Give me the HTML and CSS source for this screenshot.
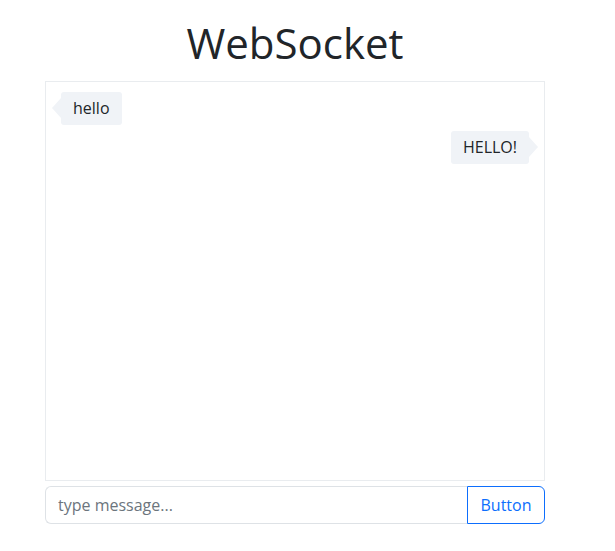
FILE: index.html
```html
<!DOCTYPE html>
<html lang="en">
<head>
<meta charset="utf-8">
<title>WebSocket</title>
<link rel="stylesheet" href="styles.css">
</head>
<body>
<div class="app">
  <h1 class="title">WebSocket</h1>
  <div class="chat">
    <div class="row left"><div class="bubble">hello</div></div>
    <div class="row right"><div class="bubble">HELLO!</div></div>
  </div>
  <div class="composer">
    <input class="field" type="text" placeholder="type message...">
    <button class="send" type="button">Button</button>
  </div>
</div>
</body>
</html>
```
FILE: styles.css
```css
html, body {
  margin: 0;
  padding: 0;
  background: #fff;
}
body {
  font-family: "Open Sans", "Noto Sans", sans-serif;
  color: #212529;
  font-size: 16px;
}
.app {
  width: 500px;
  margin-left: 45px;
  display: flex;
  flex-direction: column;
}
.title {
  margin: 14px 0 9px;
  font-weight: 400;
  font-size: 42px;
  line-height: 58px;
  text-align: center;
  letter-spacing: 0;
}
.chat {
  box-sizing: border-box;
  height: 400px;
  border: 1px solid #e9ecef;
  padding: 10px 8px;
  display: flex;
  flex-direction: column;
  gap: 6px;
}
.row {
  display: flex;
}
.row.right {
  justify-content: flex-end;
}
.bubble {
  position: relative;
  background: #f0f3f7;
  border-radius: 3px;
  padding: 5px 12px 5px;
  line-height: 23px;
  font-size: 16px;
}
.left .bubble {
  margin-left: 7px;
}
.right .bubble {
  margin-right: 7px;
}
.bubble::before {
  content: "";
  position: absolute;
  top: 6px;
  border-top: 10px solid transparent;
  border-bottom: 10px solid transparent;
}
.left .bubble::before {
  left: -9px;
  border-right: 9px solid #f0f3f7;
}
.right .bubble::before {
  right: -9px;
  border-left: 9px solid #f0f3f7;
}
.composer {
  margin-top: 5px;
  display: flex;
  height: 38px;
}
.field {
  flex: 1;
  min-width: 0;
  box-sizing: border-box;
  height: 38px;
  border: 1px solid #dee2e6;
  border-right: none;
  border-radius: 6px 0 0 6px;
  padding: 6px 12px;
  font-family: inherit;
  font-size: 16px;
  color: #212529;
  outline: none;
}
.field::placeholder {
  color: #6c757d;
}
.send {
  box-sizing: border-box;
  width: 78px;
  height: 38px;
  border: 1px solid #0d6efd;
  border-radius: 0 6px 6px 0;
  background: #fff;
  color: #0d6efd;
  font-family: inherit;
  font-size: 16px;
  padding: 6px 12px;
}
```
